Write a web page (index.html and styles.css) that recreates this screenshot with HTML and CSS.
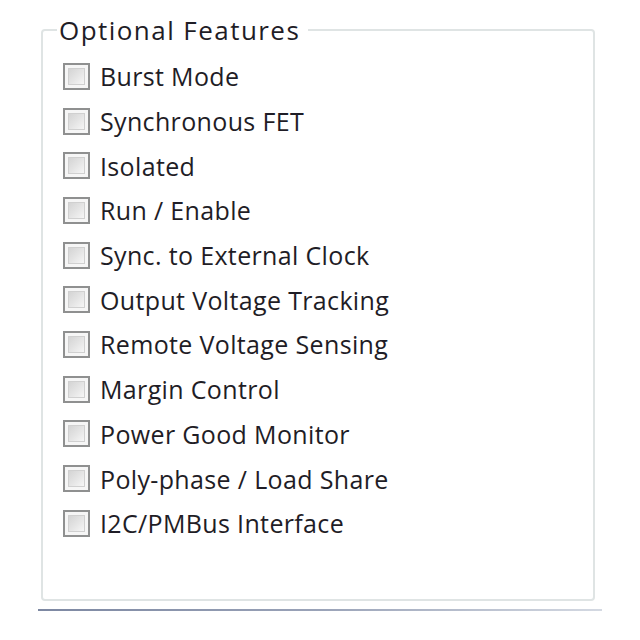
FILE: index.html
```html
<!DOCTYPE html>
<html>
<head>
<meta charset="utf-8">
<link rel="stylesheet" href="styles.css">
</head>
<body>
<div class="page">
  <fieldset class="group">
    <legend class="legend">Optional Features</legend>
    <ul class="list">
      <li class="row"><span class="box"><span class="inner"></span></span><span class="label">Burst Mode</span></li>
      <li class="row"><span class="box"><span class="inner"></span></span><span class="label">Synchronous FET</span></li>
      <li class="row"><span class="box"><span class="inner"></span></span><span class="label">Isolated</span></li>
      <li class="row"><span class="box"><span class="inner"></span></span><span class="label">Run / Enable</span></li>
      <li class="row"><span class="box"><span class="inner"></span></span><span class="label">Sync. to External Clock</span></li>
      <li class="row"><span class="box"><span class="inner"></span></span><span class="label">Output Voltage Tracking</span></li>
      <li class="row"><span class="box"><span class="inner"></span></span><span class="label">Remote Voltage Sensing</span></li>
      <li class="row"><span class="box"><span class="inner"></span></span><span class="label">Margin Control</span></li>
      <li class="row"><span class="box"><span class="inner"></span></span><span class="label">Power Good Monitor</span></li>
      <li class="row"><span class="box"><span class="inner"></span></span><span class="label">Poly-phase / Load Share</span></li>
      <li class="row"><span class="box"><span class="inner"></span></span><span class="label">I2C/PMBus Interface</span></li>
    </ul>
  </fieldset>
  <div class="rule"></div>
</div>
</body>
</html>
```

FILE: styles.css
```css
html, body {
  margin: 0;
  padding: 0;
  background: #ffffff;
}
.page {
  width: 640px;
  height: 640px;
  padding-top: 15px;
  box-sizing: border-box;
  font-family: "Open Sans", "Noto Sans", sans-serif;
  color: #1f1d26;
}
.group {
  margin: 0 0 0 41px;
  width: 554px;
  height: 586px;
  box-sizing: border-box;
  border: 2px solid #dfe4e4;
  border-radius: 4px;
  padding: 0 0 0 20px;
}
.legend {
  font-size: 26px;
  line-height: 30px;
  padding: 0 8px 0 2px;
  margin-left: -6px;
  letter-spacing: 1.45px;
}
.list {
  list-style: none;
  margin: 0;
  padding: 9px 0 0 0;
  display: flex;
  flex-direction: column;
}
.row {
  height: 44.7px;
  display: flex;
  align-items: center;
  gap: 10px;
}
.box {
  width: 27px;
  height: 27px;
  box-sizing: border-box;
  border: 2px solid #8f9090;
  background: #f6f6f6;
  padding: 3px;
  display: flex;
}
.inner {
  flex: 1;
  border: 1px solid #d0d0d0;
  background: linear-gradient(135deg, #d4d4d4 0%, #e4e4e4 50%, #f6f6f6 100%);
}
.label {
  font-size: 25px;
  letter-spacing: 0.35px;
}
.rule {
  margin: 8px 0 0 38px;
  width: 564px;
  height: 2px;
  background: linear-gradient(90deg, #7d88a2 0%, #9aa3b8 50%, #d4d9e2 100%);
}
```
